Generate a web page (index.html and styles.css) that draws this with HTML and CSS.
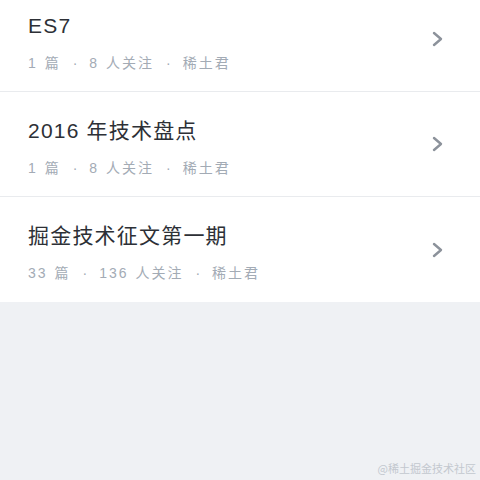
FILE: index.html
```html
<!DOCTYPE html>
<html lang="zh-CN">
<head>
    <meta charset="UTF-8" />
    <meta name="viewport" content="width=device-width, initial-scale=1.0"/>
    <title>专栏</title>
    <link rel="stylesheet" href="styles.css">
</head>
<body>

    <!-- Column list -->
    <ul class="column-list">
        <li class="column-item">
            <div class="column-info">
                <h3 class="column-title">ES7</h3>
                <p class="column-meta">1 篇<span class="dot">·</span>8 人关注<span class="dot">·</span>稀土君</p>
            </div>
            <svg class="chevron" width="12" height="16" viewBox="0 0 12 16"><path d="M2 2l7 6-7 6" fill="none" stroke="#8c929b" stroke-width="2.4" stroke-linecap="round" stroke-linejoin="round"/></svg>
        </li>
        <li class="column-item">
            <div class="column-info">
                <h3 class="column-title">2016 年技术盘点</h3>
                <p class="column-meta">1 篇<span class="dot">·</span>8 人关注<span class="dot">·</span>稀土君</p>
            </div>
            <svg class="chevron" width="12" height="16" viewBox="0 0 12 16"><path d="M2 2l7 6-7 6" fill="none" stroke="#8c929b" stroke-width="2.4" stroke-linecap="round" stroke-linejoin="round"/></svg>
        </li>
        <li class="column-item">
            <div class="column-info">
                <h3 class="column-title">掘金技术征文第一期</h3>
                <p class="column-meta">33 篇<span class="dot">·</span>136 人关注<span class="dot">·</span>稀土君</p>
            </div>
            <svg class="chevron" width="12" height="16" viewBox="0 0 12 16"><path d="M2 2l7 6-7 6" fill="none" stroke="#8c929b" stroke-width="2.4" stroke-linecap="round" stroke-linejoin="round"/></svg>
        </li>
    </ul>

    <div class="watermark">@稀土掘金技术社区</div>

</body>
</html>
```

FILE: styles.css
```css
* {
    margin: 0;
    padding: 0;
    box-sizing: border-box;
}

body {
    font-family: 'Liberation Sans', 'Noto Sans CJK SC', sans-serif;
    background: #eff1f4;
    height: 100vh;
    overflow: hidden;
    position: relative;
}

.column-list {
    list-style: none;
    margin-top: -13px;
    background: #fff;
}

.column-item {
    height: 105px;
    padding: 26px 36px 0 28px;
    display: flex;
    align-items: flex-start;
    justify-content: space-between;
    border-bottom: 1px solid #e9ebee;
}

.column-item:last-child {
    border-bottom: none;
}

.column-info {
    display: flex;
    flex-direction: column;
    gap: 15px;
}

.column-title {
    font-size: 21px;
    font-weight: normal;
    color: #2d3036;
    line-height: 26px;
    letter-spacing: 1.2px;
}

.column-meta {
    font-size: 14px;
    color: #a3abb5;
    line-height: 18px;
    letter-spacing: 2px;
    word-spacing: 1px;
}

.column-meta .dot {
    margin: 0 10px 0 12px;
}

.chevron {
    flex-shrink: 0;
    align-self: center;
    margin-top: -26px;
}

.watermark {
    position: absolute;
    right: 4px;
    bottom: 4px;
    font-family: 'Noto Sans CJK SC', sans-serif;
    font-size: 11px;
    color: #c3c8cf;
}
```
